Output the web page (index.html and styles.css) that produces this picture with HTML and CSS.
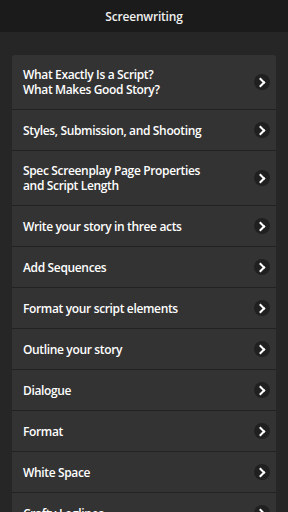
FILE: index.html
```html
<!DOCTYPE html>
<html lang="en">
<head>
  <meta charset="UTF-8" />
  <meta name="viewport" content="width=device-width, initial-scale=1.0"/>
  <title>Screenwriting</title>
  <link rel="stylesheet" href="styles.css">
</head>
<body>
  <div class="header">Screenwriting</div>
  <div class="content">
    <ul class="list">
      <li class="tall"><span>What Exactly Is a Script?<br>What Makes Good Story?</span><i class="arrow"></i></li>
      <li><span>Styles, Submission, and Shooting</span><i class="arrow"></i></li>
      <li class="tall"><span>Spec Screenplay Page Properties<br>and Script Length</span><i class="arrow"></i></li>
      <li><span>Write your story in three acts</span><i class="arrow"></i></li>
      <li><span>Add Sequences</span><i class="arrow"></i></li>
      <li><span>Format your script elements</span><i class="arrow"></i></li>
      <li><span>Outline your story</span><i class="arrow"></i></li>
      <li><span>Dialogue</span><i class="arrow"></i></li>
      <li><span>Format</span><i class="arrow"></i></li>
      <li><span>White Space</span><i class="arrow"></i></li>
      <li><span>Crafty Loglines</span><i class="arrow"></i></li>
    </ul>
  </div>
</body>
</html>
```

FILE: styles.css
```css
* { margin: 0; padding: 0; box-sizing: border-box; }
body {
  background: #262626;
  color: #fff;
  font-family: 'Open Sans', sans-serif;
  overflow: hidden;
  height: 512px;
}
.header {
  height: 32px;
  background: #1b1b1b;
  display: flex;
  align-items: center;
  justify-content: center;
  font-size: 12px;
  font-weight: 600;
  color: #f0f0f0;
  letter-spacing: -0.2px;
}
.content {
  padding: 23px 12px 0;
}
.list {
  list-style: none;
  background: #333;
  border-radius: 3px 3px 0 0;
}
.list li {
  height: 41px;
  display: flex;
  align-items: center;
  justify-content: space-between;
  padding: 0 6px 0 11px;
  border-bottom: 1px solid #222;
  font-size: 12px;
  font-weight: 600;
  line-height: 15px;
  letter-spacing: -0.35px;
}
.list li.tall { height: 55px; }
.arrow {
  width: 16px;
  height: 16px;
  border-radius: 50%;
  background: #202020;
  position: relative;
  flex-shrink: 0;
}
.arrow::after {
  content: '';
  position: absolute;
  left: 3px;
  top: 5px;
  width: 5px;
  height: 5px;
  border-top: 2px solid #fff;
  border-right: 2px solid #fff;
  transform: rotate(45deg);
}
```
